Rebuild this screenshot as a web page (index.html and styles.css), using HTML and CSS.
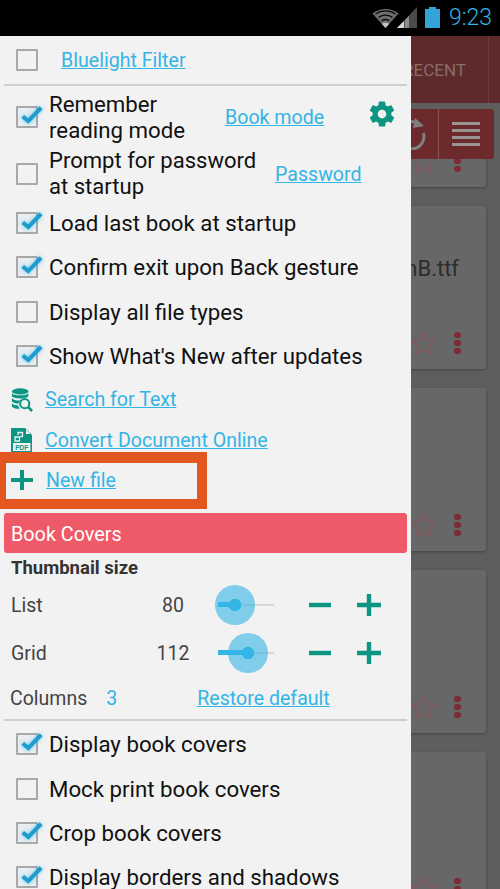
FILE: index.html
```html
<!DOCTYPE html>
<html lang="en">
<head>
<meta charset="UTF-8">
<meta name="viewport" content="width=device-width, initial-scale=1.0">
<title>Settings drawer</title>
<link rel="stylesheet" href="styles.css">
</head>
<body>

<svg class="sprites" width="0" height="0">
  <symbol id="check" viewBox="0 0 28 24">
    <path d="M5 12.5 L11 17.5 L25 3" fill="none" stroke="#1d9ccd" stroke-width="4.4"/>
  </symbol>
  <symbol id="plus" viewBox="0 0 24 24">
    <path d="M0 12 H24 M12 1 V23" fill="none" stroke="#0b9582" stroke-width="4.4"/>
  </symbol>
  <symbol id="minus" viewBox="0 0 24 24">
    <path d="M1 12 H23" fill="none" stroke="#0b9582" stroke-width="4.4"/>
  </symbol>
  <symbol id="star" viewBox="0 0 26 26">
    <path d="M13 2 L16.2 9.7 L24.6 10.4 L18.2 15.9 L20.2 24 L13 19.7 L5.8 24 L7.8 15.9 L1.4 10.4 L9.8 9.7 Z" fill="none" stroke="#7d5a60" stroke-width="1.9"/>
  </symbol>
</svg>

<div class="screen">

  <div class="status-bar">
    <svg class="wifi" width="27" height="22" viewBox="0 0 27 22">
      <path d="M13.5 21 L0.5 6.5 C8 0.5 19 0.5 26.5 6.5 Z" fill="#6e6e6e"/>
      <path d="M3.6 7 C9.5 2.8 17.5 2.8 23.4 7 M6.6 10.4 C11 7.4 16 7.4 20.4 10.4 M9.6 13.8 C12 12.2 15 12.2 17.4 13.8" fill="none" stroke="#0b0b0b" stroke-width="1.3"/>
      <path d="M13.5 21 L9.8 16.8 C12 15.4 15 15.4 17.2 16.8 Z" fill="#c4c4c4"/>
    </svg>
    <svg class="signal" width="20" height="21" viewBox="0 0 20 21">
      <path d="M20 0 V21 H0 Z" fill="#4a4a4a"/>
      <path d="M7 14 V21 H0 Z" fill="#d8d8d8"/>
      <path d="M8 13 L12 9 V21 H8 Z" fill="#8c8c8c"/>
    </svg>
    <svg class="battery" width="15" height="21" viewBox="0 0 15 21">
      <path d="M4 0 H11 V2 H15 V21 H0 V2 H4 Z" fill="#33a4d8"/>
    </svg>
    <span class="clock">9:23</span>
  </div>

  <div class="backdrop">
    <div class="app-header">
      <span class="recent-tab">RECENT</span>
      <span class="header-cell"></span>
    </div>
    <div class="book-list">
      <div class="book-card book-card-cut">
        <div class="book-foot">
          <svg class="star" width="26" height="26"><use href="#star"/></svg>
          <span class="dots"><i></i><i></i><i></i></span>
        </div>
      </div>
      <div class="book-card">
        <div class="book-name">nB.ttf</div>
        <div class="book-foot">
          <svg class="star" width="26" height="26"><use href="#star"/></svg>
          <span class="dots"><i></i><i></i><i></i></span>
        </div>
      </div>
      <div class="book-card">
        <div class="book-foot">
          <svg class="star" width="26" height="26"><use href="#star"/></svg>
          <span class="dots"><i></i><i></i><i></i></span>
        </div>
      </div>
      <div class="book-card">
        <div class="book-foot">
          <svg class="star" width="26" height="26"><use href="#star"/></svg>
          <span class="dots"><i></i><i></i><i></i></span>
        </div>
      </div>
      <div class="book-card">
        <div class="book-foot">
          <svg class="star" width="26" height="26"><use href="#star"/></svg>
          <span class="dots"><i></i><i></i><i></i></span>
        </div>
      </div>
    </div>

    <div class="float-toolbar">
      <div class="tool-cell tool-refresh">
        <svg width="30" height="32" viewBox="0 0 30 32">
          <path d="M8 4.500 A12.500 12.500 0 0 1 19 5" fill="none" stroke="#7f7f7f" stroke-width="3"/>
          <path d="M25.500 15 A12.500 12.500 0 1 1 1 19" fill="none" stroke="#7f7f7f" stroke-width="3"/>
          <path d="M17 0 L26 8 L15 10 Z" fill="#7f7f7f"/>
        </svg>
      </div>
      <div class="tool-cell tool-menu"><i></i><i></i><i></i><i></i></div>
    </div>
  </div>

  <div class="drawer">
    <div class="row row-first">
      <span class="box"></span>
      <a class="link link-bluelight" href="#">Bluelight Filter</a>
    </div>
    <div class="rule"></div>

    <div class="row row-double row-remember">
      <span class="box on"><svg class="tick"><use href="#check"/></svg></span>
      <span class="label label-wrap">Remember<br>reading mode</span>
      <a class="link link-bookmode" href="#">Book mode</a>
      <svg class="gear" width="30" height="30" viewBox="0 0 24 24">
        <path fill="#0b9582" fill-rule="evenodd" d="M19.4 13c.04-.33.06-.66.06-1s-.02-.67-.06-1l2.1-1.65c.2-.15.25-.42.12-.64l-2-3.46c-.12-.22-.39-.3-.61-.22l-2.49 1c-.52-.4-1.08-.73-1.69-.98l-.38-2.65C14.46 2.18 14.25 2 14 2h-4c-.25 0-.46.18-.49.42l-.38 2.65c-.61.25-1.17.59-1.69.98l-2.49-1c-.23-.09-.49 0-.61.22l-2 3.46c-.13.22-.07.49.12.64L4.56 11c-.04.33-.07.67-.07 1s.03.67.07 1l-2.1 1.65c-.19.15-.25.42-.12.64l2 3.46c.12.22.39.3.61.22l2.49-1c.52.4 1.08.73 1.69.98l.38 2.65c.03.24.24.42.49.42h4c.25 0 .46-.18.49-.42l.38-2.65c.61-.25 1.17-.59 1.69-.98l2.49 1c.23.09.49 0 .61-.22l2-3.46c.12-.22.07-.49-.12-.64L19.4 13zM12 15.5c-1.93 0-3.5-1.57-3.5-3.5s1.57-3.5 3.5-3.5 3.5 1.57 3.5 3.5-1.57 3.5-3.5 3.5z"/>
      </svg>
    </div>
    <div class="row row-double row-prompt">
      <span class="box"></span>
      <span class="label label-narrow">Prompt for password<br>at startup</span>
      <a class="link link-password" href="#">Password</a>
    </div>

    <div class="checks">
      <div class="row row-check"><span class="box on"><svg class="tick"><use href="#check"/></svg></span><span class="label">Load last book at startup</span></div>
      <div class="row row-check"><span class="box on"><svg class="tick"><use href="#check"/></svg></span><span class="label">Confirm exit upon Back gesture</span></div>
      <div class="row row-check"><span class="box"></span><span class="label">Display all file types</span></div>
      <div class="row row-check"><span class="box on"><svg class="tick"><use href="#check"/></svg></span><span class="label">Show What's New after updates</span></div>
    </div>

    <div class="row row-action row-search">
      <svg class="action-icon" width="22" height="24" viewBox="0 0 24 26">
        <ellipse cx="10" cy="3.6" rx="9" ry="3.4" fill="#0b9582"/>
        <path d="M1 5.500 C3 8.500 17 8.500 19 5.500 V9 C17 12 3 12 1 9 Z" fill="#0b9582"/>
        <path d="M1 11 C3 13.500 9 14 12 13 C9.500 14.200 8.500 15.500 8 17 C5 17 2 15.800 1 14.500 Z" fill="#0b9582"/>
        <path d="M1 16.500 C2.500 18.200 5 18.800 8 19 C8.200 20.500 8.800 21.500 9.600 22.500 C5 22.700 2 21.500 1 20 Z" fill="#0b9582"/>
        <circle cx="15" cy="17" r="5" fill="none" stroke="#0b9582" stroke-width="2.200"/>
        <path d="M18.500 20.500 L23 25" stroke="#0b9582" stroke-width="3"/>
      </svg>
      <a class="link" href="#">Search for Text</a>
    </div>
    <div class="row row-action row-convert">
      <svg class="action-icon" width="21" height="26" viewBox="0 0 21 26">
        <path fill="#0b9582" d="M0 1 Q0 0 1 0 H14 L21 7 V25 Q21 26 20 26 H1 Q0 26 0 25 Z"/>
        <path fill="#f2f2f2" d="M15 1.500 L19.500 6 H15 Z"/>
        <path d="M4 9 H8.500 V13 H4 Z M7 7 V4.500 H11.500 V8.500 H9.500" fill="none" stroke="#f2f2f2" stroke-width="1.300"/>
        <rect x="2" y="15" width="17.500" height="8" fill="#f2f2f2"/>
        <text class="pdf-tag" x="10.700" y="21.800">PDF</text>
      </svg>
      <a class="link" href="#">Convert Document Online</a>
    </div>
    <div class="row row-action row-newfile">
      <svg class="plus-icon" width="22" height="22"><use href="#plus"/></svg>
      <a class="link" href="#">New file</a>
      <span class="callout"></span>
    </div>

    <div class="section-bar">Book Covers</div>
    <div class="section-title">Thumbnail size</div>

    <div class="size-row size-list">
      <span class="size-name">List</span>
      <span class="size-value">80</span>
      <div class="slider">
        <span class="slider-fill" style="width:17px"></span>
        <span class="slider-thumb" style="left:17px"></span>
      </div>
      <svg class="step" width="24" height="24"><use href="#minus"/></svg>
      <svg class="step step-plus" width="24" height="24"><use href="#plus"/></svg>
    </div>
    <div class="size-row size-grid">
      <span class="size-name">Grid</span>
      <span class="size-value">112</span>
      <div class="slider">
        <span class="slider-fill" style="width:30px"></span>
        <span class="slider-thumb" style="left:30px"></span>
      </div>
      <svg class="step" width="24" height="24"><use href="#minus"/></svg>
      <svg class="step step-plus" width="24" height="24"><use href="#plus"/></svg>
    </div>

    <div class="columns-row">
      <span class="columns-name">Columns</span>
      <span class="columns-value">3</span>
      <a class="link link-restore" href="#">Restore default</a>
    </div>
    <div class="rule rule-lower"></div>

    <div class="checks">
      <div class="row row-check"><span class="box on"><svg class="tick"><use href="#check"/></svg></span><span class="label">Display book covers</span></div>
      <div class="row row-check"><span class="box"></span><span class="label">Mock print book covers</span></div>
      <div class="row row-check"><span class="box on"><svg class="tick"><use href="#check"/></svg></span><span class="label">Crop book covers</span></div>
      <div class="row row-check"><span class="box on"><svg class="tick"><use href="#check"/></svg></span><span class="label">Display borders and shadows</span></div>
    </div>
  </div>

</div>

</body>
</html>
```

FILE: styles.css
```css
* {
  box-sizing: border-box;
}
html, body {
  margin: 0;
  padding: 0;
}
body {
  font-family: Roboto, "Liberation Sans", sans-serif;
  background: #000;
}
a {
  color: inherit;
}
.sprites {
  position: absolute;
}
.screen {
  position: relative;
  width: 500px;
  height: 889px;
  overflow: hidden;
  display: flex;
  flex-direction: column;
}

/* status bar */
.status-bar {
  height: 36px;
  flex: none;
  background: #000;
  display: flex;
  align-items: flex-start;
  padding: 7px 0 0 372px;
}
.signal {
  margin-left: -2px;
}
.battery {
  margin-left: 8px;
}
.clock {
  margin-left: 9px;
  margin-top: -3px;
  font-size: 23px;
  font-weight: 300;
  line-height: 28px;
  color: #33b5e5;
}

/* dimmed page behind the drawer */
.backdrop {
  position: relative;
  flex: 1;
  min-height: 0;
  background: #5e5e5e;
  overflow: hidden;
}
.app-header {
  height: 67px;
  background: #5f2a2b;
  display: flex;
  justify-content: flex-end;
  align-items: center;
}
.recent-tab {
  font-size: 17px;
  color: #8a6c6c;
  margin-right: 22px;
}
.header-cell {
  width: 12px;
  height: 100%;
  border-left: 1px solid #6f3c3c;
}
.book-list {
  display: flex;
  flex-direction: column;
  gap: 19px;
  padding: 17px 14px 0 0;
}
.book-card {
  height: 163px;
  flex: none;
  background: #676767;
  border-radius: 2px;
  box-shadow: 0 1px 3px rgba(0, 0, 0, 0.3);
  display: flex;
  flex-direction: column;
  justify-content: flex-end;
  position: relative;
}
.book-card-cut {
  height: 67px;
}
.book-name {
  position: absolute;
  right: 27px;
  top: 50px;
  font-size: 22px;
  color: #2c2c2c;
}
.book-foot {
  height: 52px;
  display: flex;
  justify-content: flex-end;
  align-items: center;
}
.star {
  margin-right: 18px;
}
.dots {
  width: 6px;
  margin-right: 26px;
  display: flex;
  flex-direction: column;
  gap: 1.500px;
}
.dots i {
  width: 6.500px;
  height: 6.500px;
  border-radius: 50%;
  background: #7c2b36;
}
.float-toolbar {
  position: absolute;
  top: 73px;
  right: 6px;
  width: 120px;
  height: 50px;
  background: #6d2a2d;
  border-radius: 3px;
  display: flex;
}
.tool-cell {
  height: 100%;
  display: flex;
  align-items: center;
}
.tool-refresh {
  width: 65px;
  justify-content: flex-end;
  padding-right: 10px;
  border-right: 1px solid #8a5458;
}
.tool-menu {
  flex: 1;
  flex-direction: column;
  justify-content: center;
  gap: 3.500px;
  padding-right: 1px;
}
.tool-menu i {
  width: 28px;
  height: 3.500px;
  background: #9a9494;
}

/* drawer */
.drawer {
  position: absolute;
  top: 36px;
  left: 0;
  width: 411px;
  height: 853px;
  background: #f2f2f2;
  color: #111;
  overflow: hidden;
}
.row {
  display: flex;
  align-items: center;
  position: relative;
}
.row-first {
  height: 48px;
  padding-left: 15.500px;
}
.row-first .link-bluelight {
  margin-left: 23.500px;
}
.rule {
  height: 2px;
  margin: 0 4px;
  background: #cfcfcf;
}
.row-double {
  height: 56px;
  padding-left: 15.500px;
}
.row-remember {
  margin-top: 3px;
}
.row-prompt {
  margin-top: 1px;
  margin-bottom: -1px;
}
.box {
  flex: none;
  width: 22px;
  height: 22px;
  border: 2px solid #a9a9a9;
  border-radius: 1px;
  position: relative;
}
.box.on {
  background: #e8eef1;
}
.tick {
  position: absolute;
  left: 0;
  top: -3px;
  width: 26px;
  height: 22px;
  filter: drop-shadow(0 0 2px rgba(51, 181, 229, 0.7));
}
.label {
  margin-left: 11.500px;
  font-size: 22.250px;
  line-height: 26px;
  white-space: nowrap;
}
.label-narrow {
  font-size: 22.050px;
}
.link {
  color: #33b5e5;
  font-size: 19.600px;
  white-space: nowrap;
}
.link-bookmode {
  position: absolute;
  left: 225px;
}
.gear {
  position: absolute;
  left: 367px;
  top: 10px;
}
.link-password {
  position: absolute;
  left: 275px;
}
.checks {
  display: flex;
  flex-direction: column;
}
.row-check {
  height: 44.330px;
  padding-left: 15.500px;
}
.row-action {
  height: 41px;
  padding-left: 11px;
}
.row-search {
  margin-top: 1px;
}
.action-icon {
  flex: none;
}
.row-action .link {
  margin-left: 12px;
}
.row-convert .link {
  margin-left: 13px;
}
.pdf-tag {
  font-family: "Liberation Sans", sans-serif;
  font-size: 6.500px;
  font-weight: 700;
  fill: #0b9582;
  text-anchor: middle;
}
.row-newfile {
  height: 38px;
}
.row-newfile .link {
  margin-left: 13px;
}
.callout {
  position: absolute;
  left: 0;
  top: -9px;
  width: 207px;
  height: 57px;
  border: solid #e2561f;
  border-width: 11px 10px 10px 6px;
}
.section-bar {
  margin: 14px 4px 0;
  height: 40px;
  background: #ee5a68;
  border-radius: 3px;
  color: #fff;
  font-size: 19.800px;
  line-height: 43px;
  padding-left: 7px;
}
.section-title {
  margin-top: 4px;
  padding-left: 11px;
  font-size: 18.500px;
  font-weight: 700;
  line-height: 22px;
  color: #333;
}
.size-row {
  height: 48px;
  display: flex;
  align-items: center;
  color: #444;
  font-size: 19.500px;
  padding-left: 11px;
}
.size-list {
  margin-top: 2px;
}
.size-name {
  width: 140px;
}
.size-value {
  width: 44px;
  text-align: center;
}
.slider {
  position: relative;
  width: 56px;
  height: 2px;
  margin-left: 23px;
  background: #d6d6d6;
}
.slider-fill {
  position: absolute;
  left: 0;
  top: -2px;
  height: 5px;
  background: #33b5e5;
}
.slider-thumb {
  position: absolute;
  top: 1px;
  width: 40px;
  height: 40px;
  margin: -20px 0 0 -20px;
  border-radius: 50%;
  background: radial-gradient(circle, #33b5e5 0, #33b5e5 6px, rgba(51, 181, 229, 0.6) 6.500px);
}
.step {
  margin-left: 34px;
  flex: none;
}
.step-plus {
  margin-left: 25px;
}
.columns-row {
  height: 42px;
  display: flex;
  align-items: center;
  padding-left: 10px;
  font-size: 19.500px;
  color: #444;
}
.columns-value {
  margin-left: 19px;
  color: #33b5e5;
}
.link-restore {
  margin-left: 80px;
}
.rule-lower + .checks {
  margin-top: 1px;
}
```
